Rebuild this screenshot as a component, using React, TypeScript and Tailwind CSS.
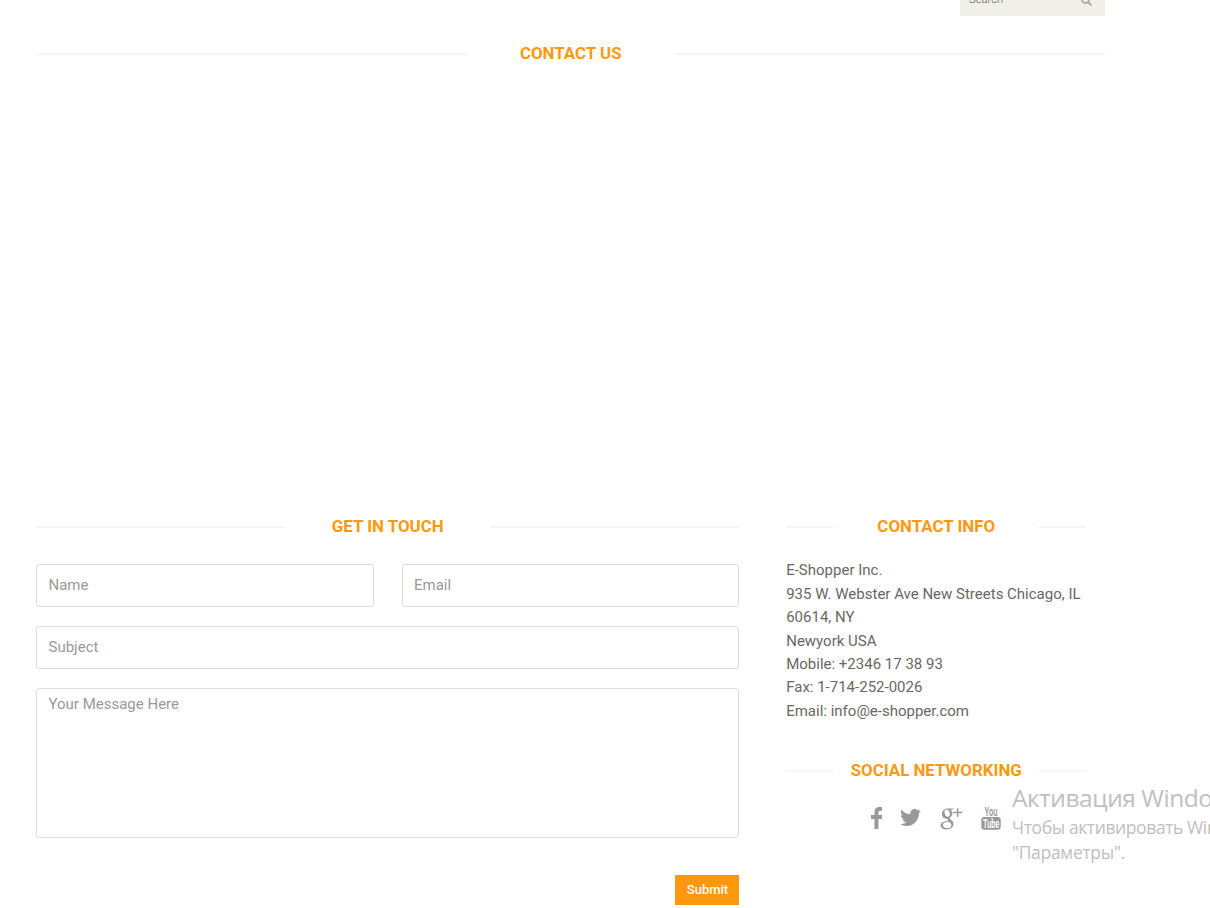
import { FaTwitter, FaSearch } from "react-icons/fa";

function Heading({ text, line, className }: { text: string; line: string; className: string }) {
  return (
    <div className={`flex items-center justify-between ${className}`}>
      <span className={`h-[2px] shrink-0 bg-[#f5f5f5] ${line}`} />
      <h2 className="whitespace-nowrap pb-[2px] pl-[0.5px] text-[16.875px] leading-[18px] font-bold text-[#fe980f]">{text}</h2>
      <span className={`h-[2px] shrink-0 bg-[#f5f5f5] ${line}`} />
    </div>
  );
}

function Facebook() {
  return (
    <svg width="11.500" height="22" viewBox="479 0 864 1664" fill="#999" aria-label="Facebook">
      <path d="M1343 12v264h-157q-86 0-116 36t-30 108v189h293l-39 296h-254v759h-306v-759h-255v-296h255v-218q0-186 104-288.500t277-102.500q147 0 228 12z" />
    </svg>
  );
}

function GooglePlus() {
  return (
    <svg width="24" height="24" viewBox="0 0 24 24" fill="#999" aria-label="Google Plus">
      <path
        transform="translate(0.400 0.700) scale(0.980 0.960)"
        fillRule="evenodd"
        d="M8.200 1.800H15l-1.900 1.300h-2c1.500 1 2.200 2.200 2.200 3.900 0 1.700-.8 2.900-2 3.800-1.500 1.200-1 1.800.3 2.800 1.700 1.300 2.800 2.300 2.800 4.500 0 3-2.600 5.700-7.200 5.700-3.900 0-6-1.700-6-4.100 0-3.300 3.400-4.700 7.600-4.900-.7-.8-.9-1.600-.5-2.400-3.400.3-5.700-1.900-5.700-4.900 0-3.300 2.700-5.700 5.600-5.700ZM7.300 2.800c-1.500.1-2.300 1.400-2 3.500.4 2.500 1.800 4.300 3.400 4.200 1.500-.1 2.200-1.400 1.900-3.500-.4-2.500-1.700-4.300-3.300-4.200ZM9.500 15.800c-3.200 0-5.900 1-5.900 3.300 0 2 1.800 3.300 4.500 3.300 2.600 0 4.100-1.100 4.100-3 0-1.500-.9-2.300-2.700-3.600Z"
      />
      <path d="M17.900 2.200h1.500v3.500h3.600v1.500h-3.600v3.600h-1.500v-3.600h-3.600V5.700h3.600z" />
    </svg>
  );
}

function YouTube() {
  return (
    <svg
      width="20"
      height="24"
      viewBox="0 0 20 24"
      className="overflow-visible"
      aria-label="YouTube"
      fontFamily="Roboto, sans-serif"
      fontWeight="600"
    >
      <rect x="0.300" y="10.900" width="19.400" height="12.900" rx="2.800" fill="#999" />
      <text x="3.600" y="9.900" fontSize="13" textLength="12.800" lengthAdjust="spacingAndGlyphs" fill="#999">You</text>
      <text x="2" y="22" fontSize="13" textLength="16.300" lengthAdjust="spacingAndGlyphs" fill="#fff">Tube</text>
    </svg>
  );
}

const field =
  "block w-full rounded-[3px] border border-[#ddd] bg-white px-[11.5px] text-[15px] text-[#666] outline-none placeholder:text-[#999]";

const address = [
  "E-Shopper Inc.",
  "935 W. Webster Ave New Streets Chicago, IL",
  "60614, NY",
  "Newyork USA",
  "Mobile: +2346 17 38 93",
  "Fax: 1-714-252-0026",
  "Email: info@e-shopper.com",
];

export default function App() {
  return (
    <div className="relative h-[908px] w-[1210px] overflow-hidden bg-white font-[Roboto,sans-serif]">
      <div className="w-[1105px] pl-9">
        <div className="flex h-4 justify-end overflow-hidden">
          <div className="-mt-4 flex h-8 w-[145px] items-center justify-between bg-[#f0f0e9] pr-[13px] pl-[9px] text-[11.25px] font-light text-[#555]">
            <span>Search</span>
            <FaSearch size={11} color="#aaa" />
          </div>
        </div>
        <Heading text="CONTACT US" line="w-[431px]" className="mt-7" />
      </div>

      <div className="mt-[453px] flex gap-[47px] pl-9">
        <section className="w-[703px]">
          <Heading text="GET IN TOUCH" line="w-[249px]" className="" />
          <form className="mt-[27px]" onSubmit={(e) => e.preventDefault()}>
            <div className="flex gap-7">
              <input className={`${field} h-[43px] pb-[2px]`} placeholder="Name" />
              <input className={`${field} h-[43px] pb-[2px]`} placeholder="Email" />
            </div>
            <input className={`${field} mt-[19px] h-[43px] pb-[2px]`} placeholder="Subject" />
            <textarea className={`${field} mt-[19px] h-[150px] resize-none pt-[4px]`} placeholder="Your Message Here" />
            <div className="mt-[37px] flex justify-end">
              <button className="h-[30px] w-16 bg-[#fe980f] pl-px text-[13px] font-medium text-white">Submit</button>
            </div>
          </form>
        </section>

        <aside className="w-[300px]">
          <Heading text="CONTACT INFO" line="w-[47px]" className="" />
          <address className="mt-[22.28px] pl-[0.2px] text-[15px] leading-[23.4375px] whitespace-nowrap text-[#696763] not-italic">
            {address.map((row) => (
              <p key={row}>{row}</p>
            ))}
          </address>
          <Heading text="SOCIAL NETWORKING" line="w-[47px]" className="mt-[37.66px]" />
          <div className="mt-[25px] flex h-6 items-center pl-[84.5px] text-[#999]">
            <Facebook />
            <FaTwitter size={21} className="ml-[18px]" />
            <div className="ml-[18px]"><GooglePlus /></div>
            <div className="ml-[18px]"><YouTube /></div>
          </div>
        </aside>
      </div>

      <div className="absolute top-[781px] left-[1012px] font-['Open_Sans','Noto_Sans',sans-serif] whitespace-nowrap text-[#c0c0c0]">
        <p className="text-[24.5px] leading-[34px] tracking-[-0.45px]">Активация Windows</p>
        <p className="text-[17.5px] leading-[25px] tracking-[-0.4px]">Чтобы активировать Windows,</p>
        <p className="text-[17.5px] leading-[25px] tracking-[-0.3px]">"Параметры".</p>
      </div>
    </div>
  );
}
